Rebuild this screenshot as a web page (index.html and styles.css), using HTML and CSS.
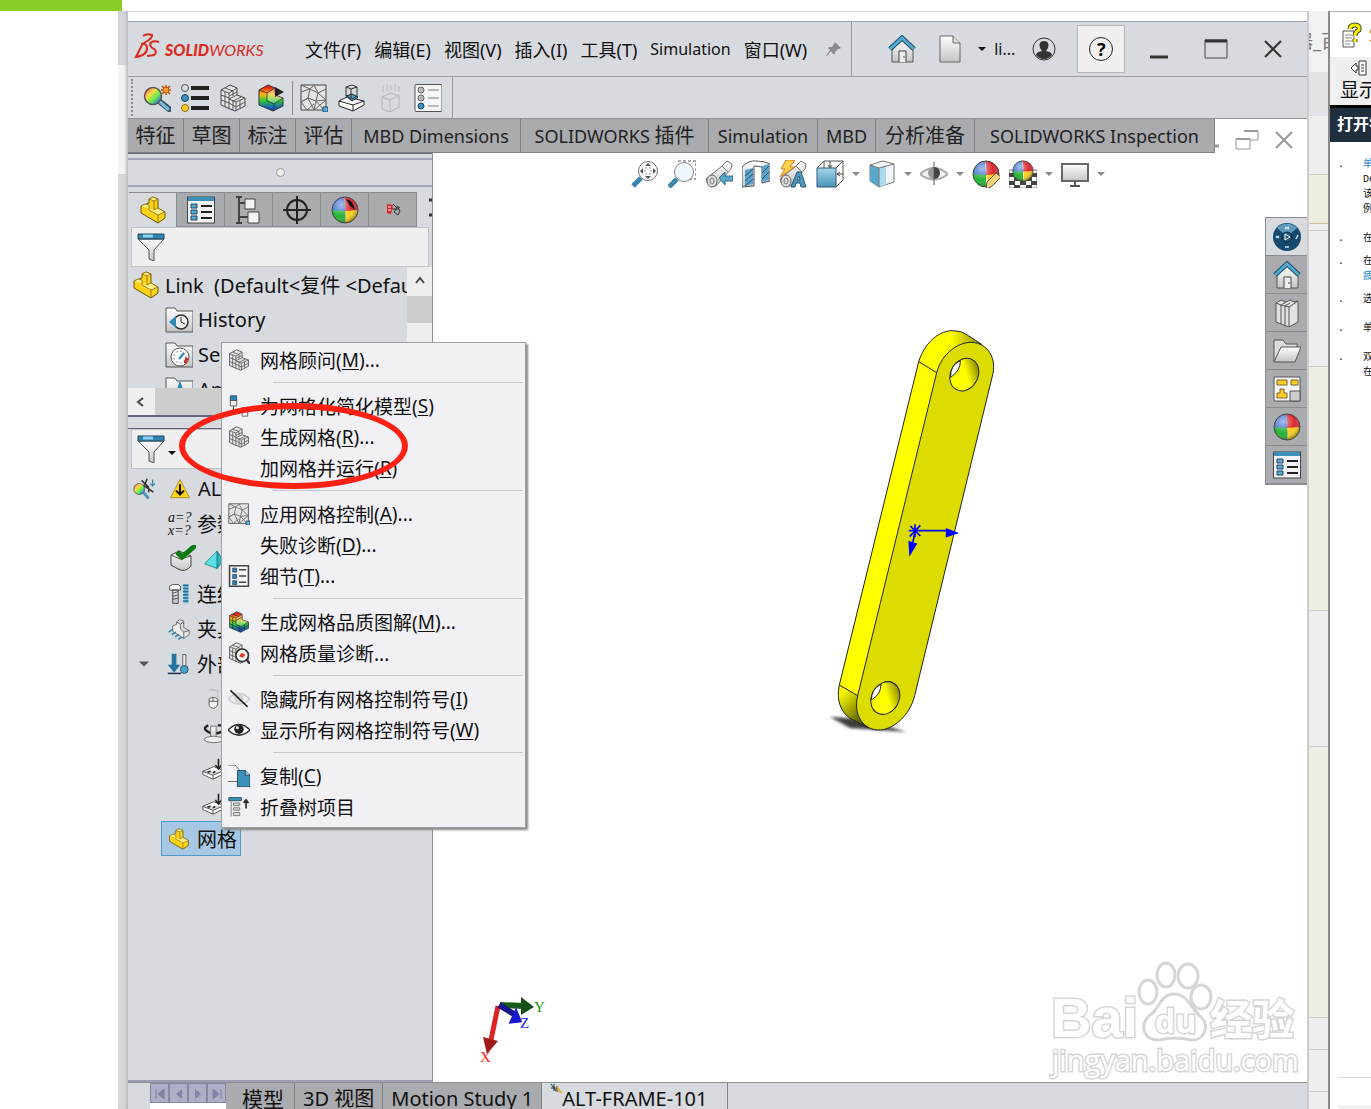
FILE: index.html
```html
<!DOCTYPE html>
<html lang="zh-CN">
<head>
    <meta charset="UTF-8">
    <title>SOLIDWORKS</title>
    <link rel="stylesheet" href="styles.css">
</head>
<body>
    <!-- 图标库 -->
    <svg class="sprite" aria-hidden="true">
        <defs>
            <linearGradient id="rainbow" x1="0" y1="0" x2="1" y2="1">
                <stop offset="0.1" stop-color="#f55"/><stop offset="0.35" stop-color="#fd4"/>
                <stop offset="0.6" stop-color="#6e4"/><stop offset="0.9" stop-color="#36f"/>
            </linearGradient>
            <linearGradient id="heat" x1="0" y1="0" x2="0" y2="1">
                <stop offset="0.1" stop-color="#e21"/><stop offset="0.35" stop-color="#fb1"/>
                <stop offset="0.6" stop-color="#3c3"/><stop offset="0.9" stop-color="#15c"/>
            </linearGradient>
            <linearGradient id="blue" x1="0" y1="0" x2="0" y2="1">
                <stop offset="0" stop-color="#a4d6ea"/><stop offset="1" stop-color="#4a93b8"/>
            </linearGradient>
            <linearGradient id="grey" x1="0" y1="0" x2="0" y2="1">
                <stop offset="0" stop-color="#fff"/><stop offset="1" stop-color="#c4c4c4"/>
            </linearGradient>
            <radialGradient id="shine" cx="0.35" cy="0.3" r="0.75">
                <stop offset="0" stop-color="#fff" stop-opacity="0.55"/><stop offset="0.6" stop-color="#fff" stop-opacity="0"/>
                <stop offset="1" stop-color="#000" stop-opacity="0.45"/>
            </radialGradient>
        </defs>
        <symbol id="part" viewBox="0 0 28 28">
            <path d="M10 3 14 1 19 3V12L26 16V22L19 27 2 17V10L10 7Z" fill="#fcd116" stroke="#6b5510"/>
            <path d="M10 3 14 1 19 3 15 5ZM2 10 6 8 10 9V14L19 19 26 16 19 12 15 14" fill="#ffef86" stroke="#8a6d12" stroke-width="0.8"/>
            <path d="M15 5V14M19 19V27" stroke="#8a6d12" stroke-width="0.8"/>
        </symbol>
        <symbol id="mesh" viewBox="0 0 28 28">
            <path d="M2 6 11 1 18 4V11L26 14V22L16 27 2 21Z" fill="#e6e6e6" stroke="#444"/>
            <path d="M2 6 10 9 18 4M10 9V25M10 15 18 11M10 15 17 18 26 14M17 18V27M2 11 10 14M2 16 10 19 17 23 26 18M6 8V23M6 4 14 7V12M14 17 22 13M14 16V26M21 16V24M10 12 18 8" fill="none" stroke="#555"/>
        </symbol>
        <symbol id="plot" viewBox="0 0 28 28">
            <path d="M2 6 11 1 18 4V11L26 14V22L16 27 2 21Z" fill="url(#heat)" stroke="#333"/>
            <path d="M10 9 18 4V11L26 14 17 19 10 16Z" fill="#fff" fill-opacity="0.35"/>
            <path d="M2 6 10 9 18 4M10 9V17L17 20 26 14M17 20V27" fill="none" stroke="#333" stroke-width="0.8"/>
        </symbol>
        <symbol id="plotmesh" viewBox="0 0 28 28">
            <use href="#plot"/>
            <path d="M2 11 10 14M2 16 10 20 17 23 26 18M6 8V23M6 4 14 7M14 19V26M21 18V24M10 12 18 8" fill="none" stroke="#123" stroke-width="0.8"/>
        </symbol>
        <symbol id="study" viewBox="0 0 28 28">
            <path d="M16 17 26 25" stroke="#2d566c" stroke-width="6" stroke-linecap="round"/>
            <path d="M17 18 25 25" stroke="#7db8d4" stroke-width="3" stroke-linecap="round"/>
            <circle cx="10" cy="12" r="8.500" fill="url(#rainbow)" stroke="#555" stroke-width="1.500"/>
            <path d="M23 1V11M18 6H28M19 2 27 10M27 2 19 10" stroke="#c2500b" stroke-width="1.500"/><circle cx="23" cy="6" r="3" fill="#f7a02b" stroke="#c2500b"/>
        </symbol>
        <symbol id="studyroot" viewBox="0 0 28 28">
            <path d="M14 19 19 25" stroke="#4d98bf" stroke-width="4" stroke-linecap="round"/>
            <circle cx="8" cy="14" r="7" fill="url(#rainbow)" stroke="#555"/>
            <path d="M11 3 20 12M18 1 15 9M13 9 26 18M20 12V18" stroke="#333" stroke-width="2"/><path d="M25 2V9M22 7 25 10 28 7" fill="none" stroke="#2f86b3" stroke-width="1.500"/>
        </symbol>
        <symbol id="bullets" viewBox="0 0 28 28">
            <path d="M10 4H28M10 14H28M10 24H28" stroke="#222" stroke-width="4"/>
            <circle cx="4" cy="4" r="3.500" fill="#ddd" stroke="#555"/><circle cx="4" cy="14" r="3.500" fill="#3b8fc0" stroke="#245"/><circle cx="4" cy="24" r="3.500" fill="#fc2" stroke="#862"/>
        </symbol>
        <symbol id="control" viewBox="0 0 28 28">
            <path d="M1 1H26V26H1Z" fill="#e4e4e4" stroke="#444"/>
            <path d="M1 8 10 5 14 1 18 9 26 5M10 5 8 14 1 18 8 14 16 17 18 9 26 16 16 17 14 26 8 14M10 5 18 9M1 18 7 26 14 20M16 17 24 26M1 1 10 5M14 26 26 16" fill="none" stroke="#666"/>
            <path d="M23 23H28V28H23Z" fill="#5ab3de" stroke="#246"/>
        </symbol>
        <symbol id="sim" viewBox="0 0 28 28">
            <path d="M1 17 9 13 26 17V21L15 27 1 22Z" fill="#fff" stroke="#222"/>
            <path d="M1 17 15 21 26 17M15 21V27" fill="none" stroke="#222"/>
            <path d="M8 12 14 10 20 13 14 17Z" fill="#4aa3cf" stroke="#222"/>
            <path d="M8 3 14 1 19 3V12L14 15 8 12ZM8 3 13 5 19 3M13 5V14" fill="none" stroke="#333"/>
        </symbol>
        <symbol id="ghost" viewBox="0 0 28 28">
            <path d="M6 13 15 9 23 12V23L14 28 6 25ZM6 13 14 16 23 12M14 16V28M7 1V8M11 0V7M15 1V6M19 0V7M23 2V8" fill="none" stroke="#b4b7ba"/>
        </symbol>
        <symbol id="report" viewBox="0 0 28 28">
            <rect x="1" y="0.500" width="27" height="27" rx="1" fill="#f6f6f6" stroke="#555"/>
            <path d="M14 6H25M14 14H25M14 22H25" stroke="#bbb" stroke-width="2"/>
            <circle cx="7" cy="6" r="3" fill="#bbb" stroke="#666"/><circle cx="7" cy="14" r="3" fill="#bbb" stroke="#666"/><circle cx="7" cy="22" r="3" fill="#3b8fc0" stroke="#245"/>
        </symbol>
        <symbol id="home" viewBox="0 0 28 28">
            <path d="M4 14V27H25V14L14 5Z" fill="url(#grey)" stroke="#555"/>
            <path d="M11 27V16H18V27M16 21V23" fill="#eee" stroke="#444"/>
            <path d="M2 14 14 3 26 14" fill="none" stroke="#1f4c63" stroke-width="5"/>
            <path d="M2 14 14 3 26 14" fill="none" stroke="#55a9d2" stroke-width="3"/>
        </symbol>
        <symbol id="page" viewBox="0 0 28 28">
            <path d="M4 1H17L24 8V27H4Z" fill="url(#grey)" stroke="#666"/><path d="M17 1V8H24" fill="#ddd" stroke="#666"/>
        </symbol>
        <symbol id="funnel" viewBox="0 0 28 28">
            <path d="M1 6H27L17 17V28L12 26V17Z" fill="url(#grey)" stroke="#555"/>
            <path d="M1 1H27V6H1Z" fill="#2f86b3" stroke="#245"/><path d="M6 3H16" stroke="#8fd0ee" stroke-width="3"/>
        </symbol>
        <symbol id="props" viewBox="0 0 28 28">
            <rect x="0.500" y="1" width="27" height="26" fill="#f4f4f4" stroke="#444"/>
            <path d="M1 1H27V5H1Z" fill="#3b8fb8"/>
            <path d="M14 10H25M14 16H25M14 22H25" stroke="#222" stroke-width="2"/>
            <path d="M4 8H10V12H4ZM4 14H10V18H4ZM4 20H10V24H4Z" fill="#55a9d2" stroke="#246"/>
        </symbol>
        <symbol id="detail" viewBox="0 0 28 28">
            <path d="M2 1H26V27H2Z" fill="#f6f6f6" stroke="#444" stroke-width="2"/>
            <path d="M14 6H23M14 14H23M14 22H23" stroke="#444" stroke-width="2"/>
            <path d="M6 4H11V9H6ZM6 12H11V17H6ZM6 20H11V25H6Z" fill="#2f86b3" stroke="#246"/>
        </symbol>
        <symbol id="config" viewBox="0 0 28 28">
            <path d="M4 1V27M1 1H7M1 27H7M5 7H12M5 21H14" stroke="#444" stroke-width="2" fill="none"/>
            <path d="M10 3H20V13H10ZM13 16H24V27H13Z" fill="#f4f4f4" stroke="#444"/>
        </symbol>
        <symbol id="target" viewBox="0 0 28 28">
            <circle cx="14" cy="14" r="10" fill="none" stroke="#222" stroke-width="2"/><path d="M14 0V28M0 14H28" stroke="#222" stroke-width="2"/>
        </symbol>
        <symbol id="ball" viewBox="0 0 28 28">
            <path d="M14 14 13 1A13 13 0 0 0 1 15Q8 17 14 15Z" fill="#3c6fd0"/>
            <path d="M13 1A13 13 0 0 1 27 15L14 15Q15 7 13 1Z" fill="#d9262c"/>
            <path d="M1 14A13 13 0 0 0 14 27L14 15Z" fill="#23b332"/>
            <path d="M27 14A13 13 0 0 1 14 27Q16 20 14 15Z" fill="#fbd21c"/>
            <circle cx="14" cy="14" r="13" fill="url(#shine)" stroke="#444"/>
        </symbol>
        <symbol id="dim" viewBox="0 0 28 28">
            <path d="M8 8 14 9 12 18 8 17Z" fill="#d22"/><path d="M9 11H12M9 14H12" stroke="#fff"/>
            <path d="M14 8 18 12 15 16 19 19 21 15 18 10 21 12M13 13H20" fill="none" stroke="#333"/>
        </symbol>
        <symbol id="histfolder" viewBox="0 0 28 28">
            <path d="M1 26V2H10L12 5H28V26Z" fill="url(#grey)" stroke="#555"/>
            <circle cx="16" cy="16" r="7" fill="#eee" stroke="#333" stroke-width="1.500"/><path d="M16 11V16L20 18" fill="none" stroke="#333"/><path d="M4 16 11 10V22Z" fill="#2f86b3"/>
        </symbol>
        <symbol id="sensor" viewBox="0 0 28 28">
            <path d="M1 26V2H10L12 5H28V26Z" fill="url(#grey)" stroke="#555"/>
            <circle cx="15" cy="16" r="9" fill="#fff" stroke="#555"/><path d="M14 18 19 12" stroke="#2f86b3" stroke-width="2"/><path d="M22 17 20 22" stroke="#d22" stroke-width="3"/><circle cx="15" cy="16" r="6" fill="none" stroke="#333" stroke-dasharray="1 3"/>
        </symbol>
        <symbol id="annot" viewBox="0 0 28 28">
            <path d="M1 26V2H10L12 5H28V26Z" fill="url(#grey)" stroke="#555"/><path d="M10 24 15 9 20 24M12 19H18" fill="none" stroke="#2f86b3" stroke-width="3"/>
        </symbol>
        <symbol id="warn" viewBox="0 0 28 28">
            <path d="M14 2 26 25H2Z" fill="#ffd21f" stroke="#9b7a10"/><path d="M14 8V20M9 16 14 21 19 16" fill="none" stroke="#111" stroke-width="2.500"/>
        </symbol>
        <symbol id="solid" viewBox="0 0 28 28">
            <path d="M3 10 11 6 23 11V21Q17 28 10 24L3 20Z" fill="url(#grey)" stroke="#444"/><path d="M3 10 12 14 23 11" fill="none" stroke="#555"/>
            <path d="M9 7 14 12 28 0" fill="none" stroke="#0b7a10" stroke-width="5"/>
        </symbol>
        <symbol id="tetra" viewBox="0 0 28 28">
            <path d="M2 20 18 4V26Z" fill="#5fe0e8" stroke="#177"/><path d="M18 4 26 16 18 26Z" fill="#2ab2c0" stroke="#177"/>
        </symbol>
        <symbol id="bolt" viewBox="0 0 28 28">
            <path d="M2 4 6 2H13L16 4V9H2ZM6 9H13V26H6Z" fill="url(#grey)" stroke="#333"/><path d="M6 13 13 11M6 17 13 15M6 21 13 19" stroke="#333"/>
            <path d="M20 2H26V26H20Z" fill="#7cc0e0"/><path d="M19 3H26M19 7H26M19 11H26M19 15H26M19 19H26M19 23H26" stroke="#246d94" stroke-width="2"/>
        </symbol>
        <symbol id="fixture" viewBox="0 0 28 28">
            <path d="M11 5 15 2 20 4V12L27 16V21L20 26 6 17V10L11 8ZM11 5 16 8 20 4M16 8V14L20 18 27 16M20 18V26" fill="#ececec" stroke="#555"/>
            <path d="M1 18 6 14M5 21 10 18M9 24 14 21M13 27 18 24" stroke="#2f86b3" stroke-width="2"/>
        </symbol>
        <symbol id="load" viewBox="0 0 28 28">
            <path d="M1 26H18" stroke="#235" stroke-width="2"/><path d="M9 1V18" stroke="#2476a0" stroke-width="6"/><path d="M1 15H17L9 25Z" fill="#2476a0"/>
            <path d="M20 2H24V18H20Z" fill="#eee" stroke="#444"/><circle cx="22" cy="21" r="5" fill="#4aa3cf" stroke="#245"/>
        </symbol>
        <symbol id="gravity" viewBox="0 0 28 28">
            <path d="M8 3H20V14M10 1 22 4" fill="none" stroke="#bbb"/><path d="M9 14Q14 10 20 14V22Q14 30 9 22Z" fill="#f2f2f2" stroke="#444"/><path d="M9 17H20M14 12V17" stroke="#444"/>
        </symbol>
        <symbol id="spin" viewBox="0 0 28 28">
            <path d="M8 3Q-1 7 9 12Q18 15 25 11M20 3H28V10" fill="none" stroke="#222" stroke-width="3"/><path d="M11 4H18V20H11Z" fill="url(#grey)" stroke="#555"/><ellipse cx="15" cy="21" rx="12" ry="4" fill="#eee" stroke="#555"/>
        </symbol>
        <symbol id="press" viewBox="0 0 28 28">
            <path d="M1 17 15 11 28 16V20L14 27 1 21ZM1 17 14 22 28 16M14 22V27" fill="#fff" stroke="#333"/><path d="M21 1V13M17 9 21 14 25 9M7 18 11 17M14 19 17 17" fill="none" stroke="#222" stroke-width="2"/>
        </symbol>
        <symbol id="simplify" viewBox="0 0 28 28">
            <path d="M3 1H11V7H3Z" fill="#2f86b3" stroke="#245"/><path d="M3 7H11V14H3Z" fill="#eee" stroke="#444"/><path d="M7 14V21H13M10 18 14 21 10 24" fill="none" stroke="#333"/><path d="M18 16H25V27H18Z" fill="#eee" stroke="#555"/>
        </symbol>
        <symbol id="diag" viewBox="0 0 28 28">
            <use href="#mesh"/><circle cx="18" cy="17" r="8" fill="#f4f4f4" stroke="#333" stroke-width="2"/><path d="M24 23 28 28" stroke="#333" stroke-width="3"/><path d="M14 18 17 14 22 16 19 20Z" fill="#e23b1c"/>
        </symbol>
        <symbol id="eye" viewBox="0 0 28 28">
            <path d="M0 14Q14 0 28 14Q14 27 0 14Z" fill="#fff" stroke="#333" stroke-width="2"/><circle cx="14" cy="13" r="6" fill="#222"/><circle cx="12" cy="11" r="2" fill="#ddd"/>
        </symbol>
        <symbol id="noeye" viewBox="0 0 28 28">
            <path d="M0 14Q14 0 28 14Q14 27 0 14Z" fill="#eee" stroke="#ccc" stroke-width="2"/><circle cx="14" cy="13" r="6" fill="#d4d4d4"/><path d="M3 3 25 24" stroke="#222" stroke-width="2"/>
        </symbol>
        <symbol id="copy" viewBox="0 0 28 28">
            <path d="M-1 0H9L14 6V21H-1Z" fill="#f6f6f6" stroke="#444"/><path d="M12 7H22L28 13V28H12Z" fill="#3b8fb8" stroke="#234"/><path d="M22 7V13H28" fill="#9fd2ea" stroke="#234"/>
        </symbol>
        <symbol id="collapse" viewBox="0 0 28 28">
            <path d="M1 2H17V6H1Z" fill="#3b8fb8" stroke="#245"/><path d="M4 7V26M7 9H15V12H7ZM7 15H15V18H7ZM7 21H15V25H7Z" stroke="#666" fill="#ddd"/><path d="M23 16V6M20 9 23 5 26 9" fill="none" stroke="#222" stroke-width="2"/>
        </symbol>
        <symbol id="zoomfit" viewBox="0 0 28 28">
            <path d="M2 26 10 18" stroke="#3d87ac" stroke-width="5"/><circle cx="17" cy="11" r="9.500" fill="#f8fbfd" stroke="#777"/>
            <path d="M17 3 20 6H14ZM17 19 14 16H20ZM9 11 12 8V14ZM25 11 22 14V8Z" fill="#555"/><path d="M14 8H20V14H14Z" fill="none" stroke="#999" stroke-dasharray="2 2"/>
        </symbol>
        <symbol id="zoomarea" viewBox="0 0 28 28">
            <path d="M10 1H28V19H22" fill="none" stroke="#555" stroke-dasharray="3 2"/><path d="M1 27 9 19" stroke="#3d87ac" stroke-width="5"/><circle cx="16" cy="12" r="9.500" fill="#eef7fb" stroke="#888"/>
        </symbol>
        <symbol id="scope" viewBox="0 0 28 28">
            <path d="M1 19 17 6 22 1 27 4 26 9 11 26Q3 28 1 19Z" fill="url(#grey)" stroke="#777"/><ellipse cx="7" cy="21" rx="5" ry="6" fill="#ddd" stroke="#666"/><ellipse cx="7" cy="21" rx="2" ry="3" fill="none" stroke="#777"/><path d="M17 6 23 12" stroke="#777"/>
        </symbol>
        <symbol id="prev" viewBox="0 0 28 28">
            <use href="#scope"/><path d="M14 18 20 12V16H28V21H20V25Z" fill="#5aa6cb" stroke="#2d6c8e"/>
        </symbol>
        <symbol id="section" viewBox="0 0 28 28">
            <path d="M0 7Q7 0 14 1Q23 1 28 4V21L20 23V7L12 6V26L0 27Z" fill="url(#grey)" stroke="#555"/>
            <path d="M3 10 11 8V24L3 26ZM20 6 27 4V20L20 22Z" fill="#5aa6cb"/><path d="M3 16 11 9M3 21 11 14M3 26 11 19M20 13 27 6M20 19 27 12" stroke="#235" stroke-width="0.800"/>
        </symbol>
        <symbol id="dynview" viewBox="0 0 28 28">
            <use href="#scope"/><path d="M7 0H16L11 7H16L1 17 6 9H2Z" fill="#ffd34a" stroke="#d07b20"/><path d="M12 27 18 12H22L27 27H22L21 23H17L16 27ZM18 20H21L20 16Z" fill="#4d98bf" stroke="#245a78"/>
        </symbol>
        <symbol id="orient" viewBox="0 0 28 28">
            <path d="M1 8 8 1H27V20L20 27M20 8 27 1M8 1V8" fill="none" stroke="#555"/><path d="M1 8H20V27H1Z" fill="url(#blue)" stroke="#357"/><path d="M14 1V7M12 5 14 8 16 5M27 14H21M24 12 21 14 24 16" fill="none" stroke="#444"/>
        </symbol>
        <symbol id="cube" viewBox="0 0 28 28">
            <path d="M2 5 15 1 26 4V22L11 27 2 21Z" fill="#f2f6f8" stroke="#777"/><path d="M2 5 11 8V27L2 21Z" fill="#5aa6cb"/><path d="M11 8 18 6V25L11 27Z" fill="#a8d9ec"/><path d="M2 5 11 8 26 4M11 8V27" fill="none" stroke="#777"/>
        </symbol>
        <symbol id="hide" viewBox="0 0 28 28">
            <path d="M0 14Q14 2 28 14Q14 25 0 14Z" fill="#f4f4f4" stroke="#aaa" stroke-width="2"/><circle cx="14" cy="13" r="6" fill="#999"/><path d="M14 7A6 6 0 0 1 14 19Z" fill="#444"/><path d="M14 2V25" stroke="#555"/>
        </symbol>
        <symbol id="appear" viewBox="0 0 28 28">
            <use href="#ball"/><path d="M15 22 24 13 29 17 19 27 14 29Z" fill="#f0d27a" stroke="#654"/>
        </symbol>
        <symbol id="scene" viewBox="0 0 28 28">
            <path d="M0 10H28V28H0Z" fill="#fff" stroke="#777"/><path d="M0 13H5V17H0ZM23 13H28V17H23ZM5 17H11V21H5ZM17 17H23V21H17ZM0 21H6V25H0ZM11 21H17V25H11ZM22 21H28V25H22ZM5 25H11V28H5ZM17 25H23V28H17Z" fill="#444"/><use href="#ball" x="3" y="0" width="22" height="22"/>
        </symbol>
        <symbol id="screen" viewBox="0 0 28 28">
            <path d="M1 4H27V21H1Z" fill="url(#grey)" stroke="#666" stroke-width="2"/><path d="M14 21V26M9 26H19" stroke="#555" stroke-width="2"/>
        </symbol>
        <symbol id="down" viewBox="0 0 8 8"><path d="M0 2H8L4 6Z" fill="currentColor"/></symbol>
        <symbol id="wheel" viewBox="0 0 28 28">
            <circle cx="14" cy="14" r="14" fill="#174a6c"/><path d="M4 5A14 14 0 0 1 24 5L18 10H10Z" fill="#5d9abd"/><circle cx="14" cy="14" r="5" fill="#1d5a82" stroke="#0a2a40"/>
            <path d="M12 11 17 14 12 17Z" fill="none" stroke="#fff"/><path d="M12 4 16 6M16 4 12 6M3 13 6 15M6 13 3 15M23 16 25 12M12 24H16" stroke="#cde" stroke-width="1.500"/>
        </symbol>
        <symbol id="books" viewBox="0 0 28 28">
            <path d="M3 4 8 1 13 3 17 1 21 3 25 2V23L16 28 3 23Z" fill="#e2e2e2" stroke="#555"/><path d="M3 4 8 6V25M8 6 13 3M8 6 12 7V26M12 7 17 4M12 7 16 8V28M16 8 25 2" fill="none" stroke="#555"/>
        </symbol>
        <symbol id="folder" viewBox="0 0 28 28">
            <path d="M1 25V3H10L13 7H24V12" fill="#ddd" stroke="#555"/><path d="M1 25 8 10H28L22 25Z" fill="url(#grey)" stroke="#555"/>
        </symbol>
        <symbol id="palette" viewBox="0 0 28 28">
            <path d="M1 2H27V26H1Z" fill="#f6f6f6" stroke="#555"/><path d="M4 5H14V10H4ZM18 5H25V10H18ZM4 18H7V14H11V18H14V23H4Z" fill="#fc2" stroke="#763"/><path d="M17 16H27V26H17Z" fill="#ccc" stroke="#555"/>
        </symbol>
        <symbol id="book-help" viewBox="0 0 28 28">
            <path d="M3 10H14V26H3Z" fill="#fff" stroke="#555"/><path d="M5 14H12M5 17H12M5 20H12M5 23H10" stroke="#888"/><path d="M10 8Q10 4 15 4Q20 4 19 9Q15 11 15 15M15 18V21" fill="none" stroke="#443" stroke-width="5"/><path d="M10 8Q10 4 15 4Q20 4 19 9Q15 11 15 15M15 18V21" fill="none" stroke="#fe0" stroke-width="3"/>
        </symbol>
    </svg>

    <div class="banner"></div>
    <div class="desktop">
        <div class="edge"></div>

        <!-- 主窗口 -->
        <main class="app">
            <header class="titlebar">
                <div class="logo">
                    <svg width="26" height="26" viewBox="0 0 26 26" fill="none" stroke="#dc2a1e" stroke-width="2"><path d="M8 3Q12 0 17 2Q18 5 9 10M8 10 1 24Q13 22 12 14Q11 10 6 11M24 9Q17 7 15 11Q15 14 19 16Q23 19 19 22L12 23"/></svg>
                    <span><b>SOLID</b>WORKS</span>
                </div>
                <nav class="menubar">
                    <button>文件(F)</button>
                    <button>编辑(E)</button>
                    <button>视图(V)</button>
                    <button>插入(I)</button>
                    <button>工具(T)</button>
                    <button class="latin">Simulation</button>
                    <button>窗口(W)</button>
                </nav>
                <svg class="pin" width="16" height="16" viewBox="0 0 16 16" fill="#8a8d90"><path d="M9 1 15 7 13 8 12 8 9 11 9 13 7 13 5 10 1 15 0 15 4 9 2 7 3 6 6 6 8 3Z"/></svg>
                <div class="titletools">
                    <button aria-label="主页"><svg class="icon"><use href="#home"/></svg></button>
                    <button class="new" aria-label="新建"><svg class="icon"><use href="#page"/></svg></button>
                    <button class="drop" aria-label="展开"><svg class="arrow"><use href="#down"/></svg></button>
                    <span class="doc">li...</span>
                    <button aria-label="用户"><svg width="24" height="24" viewBox="0 0 24 24"><circle cx="12" cy="12" r="11" fill="none" stroke="#333"/><path d="M12 4Q18 4 16 11L14 14Q20 15 20 18Q17 22 12 22Q7 22 4 18Q4 15 10 14L8 11Q6 4 12 4Z" fill="#333"/></svg></button>
                    <button class="helpbtn" aria-label="帮助"><span>?</span></button>
                </div>
                <div class="winbtns">
                    <button aria-label="最小化"><svg width="24" height="24"><path d="M3 20H21" stroke="#333" stroke-width="3"/></svg></button>
                    <button aria-label="最大化"><svg width="24" height="24"><path d="M1 3H23V21H1Z" fill="none" stroke="#444"/><path d="M1 4H23" stroke="#333" stroke-width="3"/></svg></button>
                    <button aria-label="关闭"><svg width="24" height="24"><path d="M4 4 20 20M20 4 4 20" stroke="#333" stroke-width="2"/></svg></button>
                </div>
            </header>

            <div class="toolbar">
                <div class="tools">
                    <i class="grip"></i>
                    <svg class="icon"><use href="#study"/></svg>
                    <svg class="icon"><use href="#bullets"/></svg>
                    <svg class="icon"><use href="#mesh"/></svg>
                    <svg class="icon"><use href="#plot"/><path d="M18 3 27 8 18 13Z" fill="#222"/></svg>
                    <i class="sep"></i>
                    <svg class="icon"><use href="#control"/></svg>
                    <svg class="icon"><use href="#sim"/></svg>
                    <svg class="icon"><use href="#ghost"/></svg>
                    <svg class="icon"><use href="#report"/></svg>
                </div>
            </div>

            <div class="tabrow">
                <nav class="cmdtabs">
                    <button>特征</button>
                    <button>草图</button>
                    <button>标注</button>
                    <button>评估</button>
                    <button class="latin">MBD Dimensions</button>
                    <button class="latin">SOLIDWORKS <span>插件</span></button>
                    <button class="latin">Simulation</button>
                    <button class="latin">MBD</button>
                    <button>分析准备</button>
                    <button class="latin">SOLIDWORKS Inspection</button>
                </nav>
                <div class="docbtns">
                    <svg width="6" height="24"><path d="M0 18H4" stroke="#999" stroke-width="3"/></svg>
                    <svg width="24" height="24"><path d="M9 3H23V12H15M1 11H15V21H1Z" fill="none" stroke="#999"/><path d="M9 3H23M1 11H15" stroke="#999" stroke-width="2"/></svg>
                    <svg width="24" height="24"><path d="M4 4 20 20M20 4 4 20" stroke="#999" stroke-width="2"/></svg>
                </div>
            </div>

            <div class="work">
                <!-- 左侧管理器 -->
                <aside class="manager">
                    <div class="handle"><i></i></div>
                    <div class="mtabs">
                        <button class="on" aria-label="设计树"><svg class="icon"><use href="#part"/></svg></button>
                        <button aria-label="属性"><svg class="icon"><use href="#props"/></svg></button>
                        <button aria-label="配置"><svg class="icon"><use href="#config"/></svg></button>
                        <button aria-label="尺寸"><svg class="icon"><use href="#target"/></svg></button>
                        <button aria-label="外观"><svg class="icon"><use href="#ball"/><path d="M15 3Q22 4 24 14L19 10Z" fill="#111"/></svg></button>
                        <button aria-label="标注"><svg class="icon"><use href="#dim"/></svg></button>
                        <svg class="more" width="4" height="35"><path d="M1 8H4M1 23H4" stroke="#333" stroke-width="3"/></svg>
                    </div>
                    <label class="filter">
                        <svg class="icon"><use href="#funnel"/></svg>
                        <input type="text" aria-label="过滤">
                    </label>
                    <div class="treebox">
                        <ul class="tree">
                            <li class="root"><svg class="icon"><use href="#part"/></svg>Link&nbsp; (Default&lt;复件 &lt;Default&gt;</li>
                            <li><svg class="icon"><use href="#histfolder"/></svg>History</li>
                            <li><svg class="icon"><use href="#sensor"/></svg>Sensors</li>
                            <li><svg class="icon"><use href="#annot"/></svg>Annotations</li>
                        </ul>
                        <div class="vscroll"><svg width="12" height="12"><path d="M2 8 6 3 10 8" fill="none" stroke="#444" stroke-width="2"/></svg><i></i></div>
                    </div>
                    <div class="hscroll"><svg width="12" height="12"><path d="M8 2 3 6 8 10" fill="none" stroke="#444" stroke-width="2"/></svg><i></i></div>
                    <div class="splitter"></div>
                    <label class="filter study">
                        <svg class="icon"><use href="#funnel"/></svg>
                        <svg class="arrow"><use href="#down"/></svg>
                        <input type="text" aria-label="过滤算例">
                    </label>
                    <ul class="tree studytree">
                        <li class="top"><svg class="small"><use href="#studyroot"/></svg><svg class="small"><use href="#warn"/></svg>ALT-FRAME-101</li>
                        <li><em>a=?<br>x=?</em>参数</li>
                        <li><svg class="icon"><use href="#solid"/></svg><svg class="small"><use href="#tetra"/></svg></li>
                        <li><svg class="small"><use href="#bolt"/></svg>连结</li>
                        <li><svg class="small"><use href="#fixture"/></svg>夹具</li>
                        <li class="open"><svg class="arrow"><use href="#down"/></svg><svg class="small"><use href="#load"/></svg>外部载荷</li>
                        <li class="sub"><svg class="small"><use href="#gravity"/></svg></li>
                        <li class="sub"><svg class="small"><use href="#spin"/></svg></li>
                        <li class="sub"><svg class="small"><use href="#press"/></svg></li>
                        <li class="sub"><svg class="small"><use href="#press"/></svg></li>
                        <li class="sel"><svg class="small"><use href="#part"/></svg>网格</li>
                    </ul>
                </aside>

                <!-- 图形区域 -->
                <section class="viewport">
                    <div class="headsup">
                        <svg class="icon"><use href="#zoomfit"/></svg>
                        <svg class="icon"><use href="#zoomarea"/></svg>
                        <svg class="icon"><use href="#prev"/></svg>
                        <svg class="icon"><use href="#section"/></svg>
                        <svg class="icon"><use href="#dynview"/></svg>
                        <svg class="icon"><use href="#orient"/></svg>
                        <svg class="arrow"><use href="#down"/></svg>
                        <svg class="icon"><use href="#cube"/></svg>
                        <svg class="arrow"><use href="#down"/></svg>
                        <svg class="icon"><use href="#hide"/></svg>
                        <svg class="arrow"><use href="#down"/></svg>
                        <svg class="icon"><use href="#appear"/></svg>
                        <svg class="icon"><use href="#scene"/></svg>
                        <svg class="arrow"><use href="#down"/></svg>
                        <svg class="icon"><use href="#screen"/></svg>
                        <svg class="arrow"><use href="#down"/></svg>
                    </div>

                    <!-- 连杆模型 -->
                    <svg class="model" width="220" height="440" viewBox="0 0 660 1320">
                        <defs>
                            <linearGradient id="endtop" x1="0" x2="1"><stop offset="0.5" stop-color="#ff0"/><stop offset="1" stop-color="#8c8c00"/></linearGradient>
                            <linearGradient id="endlow" x1="0" y1="0" x2="0.7" y2="1"><stop offset="0.2" stop-color="#f4f400"/><stop offset="1" stop-color="#4a4a00"/></linearGradient>
                            <linearGradient id="hole" x1="0" y1="1" x2="0.8" y2="0"><stop offset="0.6" stop-color="#ff0"/><stop offset="1" stop-color="#777700"/></linearGradient>
                            <filter id="soft"><feGaussianBlur stdDeviation="4"/></filter>
                        </defs>
                        <path d="M90 1220 190 1228 320 1266 150 1254Z" fill="#3c3c3c" filter="url(#soft)"/>
                        <path d="M118 1125 356 155 410 188 173 1157Z" fill="#ff0"/>
                        <path d="M356 155C375 95 420 60 460 62Q485 62 500 74L548 104 410 188Z" fill="url(#endtop)"/>
                        <path d="M118 1125C108 1170 122 1205 150 1225L205 1255 173 1157Z" fill="url(#endlow)"/>
                        <path d="M410 188C425 130 475 96 515 97C565 100 588 145 579 190L344 1157C330 1215 280 1262 232 1260C185 1256 160 1210 173 1157Z" fill="#dcdc00" stroke="#222" stroke-width="3"/>
                        <path d="M205 1253 150 1225C122 1205 108 1170 118 1125L356 155C375 95 420 60 460 62Q485 62 500 74L545 103M356 155 410 188M118 1125 173 1157" fill="none" stroke="#222" stroke-width="3"/>
                        <g stroke="#222" stroke-width="3">
                            <ellipse cx="493" cy="194" rx="41" ry="51" transform="rotate(28 493 194)" fill="url(#hole)"/>
                            <path d="M452 202Q450 165 481 152Q482 182 452 202Z" fill="#fff"/>
                            <ellipse cx="256" cy="1164" rx="41" ry="51" transform="rotate(28 256 1164)" fill="url(#hole)"/>
                            <path d="M214 1170Q214 1138 243 1122Q244 1152 214 1170Z" fill="#fff"/>
                        </g>
                        <g fill="#00f" stroke="#00f" stroke-width="5">
                            <path d="M345 643V682M326 662H440M331 648 361 678M361 646 329 680M345 665 338 700"/>
                            <path d="M440 658 470 669 440 679ZM328 696 348 702 330 732Z"/>
                        </g>
                    </svg>

                    <!-- 坐标轴 -->
                    <svg class="triad" width="80" height="76" viewBox="0 0 80 76">
                        <path d="M22 11 46 12" stroke="#1a5c1a" stroke-width="6"/><path d="M43 3 56 13 43 21Z" fill="#174f17"/>
                        <path d="M20 12 13 46" stroke="#dc2424" stroke-width="5"/><path d="M5 43 20 47 9 60Z" fill="#a01a1a"/>
                        <path d="M21 11 36 20" stroke="#15158c" stroke-width="6"/><path d="M38 17 42 27 33 28Z" fill="#1818cf" stroke="#1818cf" stroke-width="3"/>
                        <text x="56" y="18" fill="#0a9a0a">Y</text><text x="42" y="34" fill="#22f">Z</text><text x="2" y="68" fill="#f22">X</text>
                    </svg>

                    <div class="taskpane">
                        <button class="on" aria-label="资源轮"><svg class="icon"><use href="#wheel"/></svg></button>
                        <button aria-label="资源"><svg class="icon"><use href="#home"/></svg></button>
                        <button aria-label="设计库"><svg class="icon"><use href="#books"/></svg></button>
                        <button aria-label="文件探索器"><svg class="icon"><use href="#folder"/></svg></button>
                        <button aria-label="视图调色板"><svg class="icon"><use href="#palette"/></svg></button>
                        <button aria-label="外观布景"><svg class="icon"><use href="#ball"/></svg></button>
                        <button aria-label="自定义属性"><svg class="icon"><use href="#props"/></svg></button>
                    </div>

                    <svg class="watermark" width="260" height="124" viewBox="0 0 260 124">
                        <g fill="#fff" stroke="#d6d6d6" stroke-width="3">
                            <text class="wm-big" x="8" y="78">Bai</text>
                            <ellipse cx="105" cy="33" rx="9" ry="12"/><ellipse cx="123" cy="16" rx="9" ry="12"/><ellipse cx="145" cy="17" rx="10" ry="12"/><ellipse cx="158" cy="38" rx="10" ry="12"/>
                            <path d="M131 35C145 35 148 50 157 57C168 67 161 82 148 81Q131 77 117 81C101 82 96 67 106 57C117 50 117 35 131 35Z"/>
                            <text class="wm-du" x="112" y="74">du</text>
                            <text class="wm-cn" x="167" y="76">经验</text>
                            <text class="wm-url" x="9" y="112">jingyan.baidu.com</text>
                        </g>
                    </svg>
                </section>

                <!-- 右键菜单 -->
                <div class="ctxmenu" role="menu">
                    <button><svg class="small"><use href="#mesh"/></svg>网格顾问(<u>M</u>)...</button>
                    <hr>
                    <button><svg class="small"><use href="#simplify"/></svg>为网格化简化模型(<u>S</u>)</button>
                    <button><svg class="small"><use href="#mesh"/></svg>生成网格(<u>R</u>)...</button>
                    <button><i class="small"></i>加网格并运行(<u>R</u>)</button>
                    <hr>
                    <button><svg class="small"><use href="#control"/></svg>应用网格控制(<u>A</u>)...</button>
                    <button><i class="small"></i>失败诊断(<u>D</u>)...</button>
                    <button><svg class="small"><use href="#detail"/></svg>细节(<u>T</u>)...</button>
                    <hr>
                    <button><svg class="small"><use href="#plotmesh"/></svg>生成网格品质图解(<u>M</u>)...</button>
                    <button><svg class="small"><use href="#diag"/></svg>网格质量诊断...</button>
                    <hr>
                    <button><svg class="small"><use href="#noeye"/></svg>隐藏所有网格控制符号(<u>I</u>)</button>
                    <button><svg class="small"><use href="#eye"/></svg>显示所有网格控制符号(<u>W</u>)</button>
                    <hr>
                    <button><svg class="small"><use href="#copy"/></svg>复制(<u>C</u>)</button>
                    <button><svg class="small"><use href="#collapse"/></svg>折叠树项目</button>
                </div>
                <div class="mark"></div>
            </div>

            <footer class="bottom">
                <div class="nav">
                    <button aria-label="最前"><svg width="12" height="12"><path d="M2 1V11M10 1 4 6 10 11Z" fill="#8082a8" stroke="#8082a8"/></svg></button>
                    <button aria-label="向前"><svg width="12" height="12"><path d="M9 1 3 6 9 11Z" fill="#8082a8"/></svg></button>
                    <button aria-label="向后"><svg width="12" height="12"><path d="M3 1 9 6 3 11Z" fill="#8082a8"/></svg></button>
                    <button aria-label="最后"><svg width="12" height="12"><path d="M10 1V11M2 1 8 6 2 11Z" fill="#8082a8" stroke="#8082a8"/></svg></button>
                </div>
                <button class="cn">模型</button>
                <button>3D <span>视图</span></button>
                <button>Motion Study 1</button>
                <button class="on"><svg width="12" height="12"><path d="M1 1 6 8M4 1V8M7 3V9M1 5H8" stroke="#234" fill="none"/><path d="M7 4 11 10" stroke="#da2" stroke-width="2"/></svg>ALT-FRAME-101</button>
            </footer>
        </main>

        <!-- 后面的浏览器窗口 -->
        <div class="behind">
            <div class="title">器_百</div>
            <div class="bar"></div>
            <div class="head"></div>
            <div class="notice"></div>
            <div class="line"></div>
            <div class="block"></div>
            <div class="post"></div>
            <div class="block"></div>
            <div class="post"></div>
            <div class="row"></div>
            <div class="row"></div>
        </div>

        <!-- 帮助窗口 -->
        <aside class="help">
            <div class="helptitle"><svg class="icon"><use href="#book-help"/></svg>SOLIDWORKS</div>
            <div class="helptool"><button><svg width="18" height="16"><path d="M1 8 6 3V6H8V10H6V13Z" fill="#fff" stroke="#333"/><path d="M9 1H16V15H9ZM11 5H14M11 8H14M11 11H14" fill="#fff" stroke="#333"/></svg>显示</button></div>
            <h1>打开零件</h1>
            <ul>
                <li><a href="#">单击</a><br>Default</li>
                <li class="note">该零件<br>例如</li>
                <li>在此</li>
                <li class="near">在树<br><a href="#">疲劳</a></li>
                <li class="near">选择</li>
                <li>单击</li>
                <li>双击<br>在此</li>
            </ul>
            <div class="helpfoot"></div>
        </aside>
    </div>
</body>
</html>
```

FILE: styles.css
```css
*{
    box-sizing: border-box;
    margin: 0;
    padding: 0;
}
body{
    display: flex;
    flex-direction: column;
    height: 100vh;
    overflow: hidden;
    background: #fff;
    color: #111;
    font: 19px "Noto Sans", "Noto Sans CJK SC", sans-serif;
}
button{
    border: 0;
    background: none;
    color: inherit;
    font: inherit;
    white-space: nowrap;
}
ul{
    list-style: none;
}
svg{
    flex: none;
    overflow: visible;
}
.sprite{
    position: absolute;
    width: 0;
    height: 0;
}
.icon{
    width: 28px;
    height: 28px;
}
.small{
    width: 22px;
    height: 22px;
    flex: none;
}
.arrow{
    width: 8px;
    height: 8px;
}

/* 顶部绿条 */
.banner{
    width: 122px;
    height: 11px;
    background: #8acd27;
}
.desktop{
    display: flex;
    flex: 1;
    min-height: 0;
    padding-left: 118px;
}
.edge{
    width: 10px;
    background: linear-gradient(#d3d7dc 54px, #f4f4f4 54px, #f4f4f4 163px, #d8d8d8 163px);
    box-shadow: inset -3px 0 3px -1px #bbb;
}

/* 主窗口 */
.app{
    display: flex;
    flex: 1;
    flex-direction: column;
    min-width: 0;
    padding-top: 9px;
    border-top: 1px solid #ddd;
}

/* 标题栏 */
.titlebar{
    display: flex;
    align-items: center;
    height: 56px;
    border-top: 1px solid #a2a5a8;
    border-bottom: 1px solid #999c9f;
    background: #d7dadf;
}
.logo{
    display: flex;
    align-items: center;
    gap: 4px;
    width: 171px;
    padding-left: 7px;
    color: #dc2a1e;
    font: italic 16px Lato, sans-serif;
}
.logo svg{
    margin-bottom: 6px;
}
.logo b{
    font-weight: 900;
}
.menubar{
    display: flex;
    align-items: center;
    gap: 13px;
    padding-left: 6px;
    font-size: 18px;
}
.menubar .latin{
    font-size: 16px;
}
.pin{
    margin: 0 9px 0 19px;
}
.titletools{
    display: flex;
    align-items: center;
    height: 100%;
    padding-left: 36px;
    border-left: 1px solid #999c9f;
}
.titletools button{
    display: flex;
}
.titletools .new{
    margin-left: 20px;
}
.titletools .drop{
    margin: 0 8px 0 14px;
}
.doc{
    width: 38px;
    font-size: 16px;
}
.titletools .helpbtn{
    align-items: center;
    justify-content: center;
    width: 48px;
    height: 48px;
    margin-left: 21px;
    border: 1px solid #b4b4b4;
    background: #f0f0f0;
}
.helpbtn span{
    width: 24px;
    height: 24px;
    border: 1px solid #222;
    border-radius: 50%;
    font-size: 18px;
    font-weight: bold;
    line-height: 22px;
}
.winbtns{
    display: flex;
    gap: 33px;
    margin-left: auto;
    padding-right: 22px;
}
.winbtns button{
    display: flex;
}

/* 工具栏 */
.toolbar{
    height: 41px;
    background: #d7dadf;
}
.tools{
    display: flex;
    align-items: center;
    gap: 10px;
    width: 325px;
    height: 100%;
    border-right: 1px solid #999c9f;
}
.grip{
    height: 37px;
    margin-left: 3px;
    border-left: 2px dotted #8a8d90;
}
.sep{
    height: 34px;
    margin: 0 -3px;
    border-left: 1px solid #8a8d90;
}

/* 命令选项卡 */
.tabrow{
    display: flex;
    height: 35px;
    border-top: 1px solid #8e9194;
}
.cmdtabs{
    display: grid;
    grid-template-columns: 56px 56px 56px 56px 169px 188px 109px 58px 99px 240px;
    background: #a9abae;
}
.cmdtabs button{
    border-right: 1px solid #808386;
    border-bottom: 1px solid #808386;
    color: #222;
    font-size: 20px;
    line-height: 32px;
}
.cmdtabs .latin{
    font-size: 18px;
}
.cmdtabs span{
    font-size: 20px;
}
.docbtns{
    display: flex;
    flex: 1;
    align-items: center;
    justify-content: space-between;
    padding: 8px 11px 0 0;
}

/* 工作区 */
.work{
    position: relative;
    display: flex;
    flex: 1;
    min-height: 0;
}
.manager{
    width: 305px;
    overflow: hidden;
    border-right: 1px solid #8e9194;
    border-bottom: 2px solid #9c9fb4;
    background: #d7dade;
}
.handle{
    display: flex;
    align-items: center;
    justify-content: center;
    height: 34px;
    margin-bottom: 5px;
    border-top: 1px solid #62667c;
    border-bottom: 2px solid #a0a4b8;
    box-shadow: inset 0 4px #d7dade, inset 0 6px #a0a4b8;
}
.handle i{
    width: 9px;
    height: 9px;
    margin-top: 5px;
    border: 1px solid #999;
    border-radius: 50%;
    background: #eee;
}
.mtabs{
    display: flex;
    height: 35px;
    margin-left: 1px;
}
.mtabs button{
    display: flex;
    align-items: center;
    justify-content: center;
    width: 48px;
    border: 1px solid #8a8d90;
    border-left: 0;
    background: #a9abae;
}
.mtabs .on{
    border-bottom: 0;
    background: #d7dade;
}
.more{
    margin-left: 11px;
}
.filter{
    display: flex;
    align-items: center;
    height: 40px;
    margin: 0 3px;
    padding-left: 5px;
    border: 1px solid #c2c4c6;
    background: #f0f0f0;
}
.filter input{
    flex: 1;
    min-width: 0;
    height: 100%;
    border: 0;
    background: none;
}
.filter .arrow{
    margin: 8px 0 0 3px;
}
.treebox{
    display: flex;
    height: 121px;
    overflow: hidden;
}
.tree{
    flex: 1;
    overflow: hidden;
    font-size: 20px;
}
.tree li{
    display: flex;
    align-items: center;
    gap: 5px;
    height: 35px;
    padding-left: 37px;
    white-space: nowrap;
}
.tree .root{
    padding-left: 4px;
}
.tree em{
    width: 22px;
    font: italic 14px/13px "Liberation Serif", serif;
}
.vscroll{
    width: 25px;
    background: #eee;
    text-align: center;
}
.vscroll i{
    display: block;
    height: 27px;
    margin-top: 3px;
    background: #cdcdcd;
}
.hscroll{
    display: flex;
    align-items: center;
    gap: 8px;
    height: 27px;
    padding-left: 7px;
    background: #eee;
}
.hscroll i{
    width: 180px;
    height: 100%;
    background: #cdcdcd;
}
.splitter{
    height: 14px;
    border-top: 2px solid #62667c;
    border-bottom: 1px solid #62667c;
}
.studytree{
    padding-top: 2px;
}
.studytree li{
    gap: 7px;
    padding-left: 40px;
}
.studytree .top{
    gap: 14px;
    padding-left: 5px;
}
.studytree .top .small + .small{
    margin-right: -7px;
}
.studytree .open{
    gap: 8px;
    padding-left: 11px;
}
.studytree .open .arrow{
    width: 10px;
    height: 10px;
    margin-right: 10px;
    color: #555;
}
.studytree .sub{
    padding-left: 74px;
}
.studytree .sel{
    width: 80px;
    margin-left: 33px;
    padding-left: 6px;
    border: 1px solid #4f9bc8;
    background: #a6c8e4;
}

/* 图形区域 */
.viewport{
    position: relative;
    flex: 1;
    overflow: hidden;
    background: #fff;
}
.headsup{
    display: flex;
    align-items: center;
    justify-content: center;
    gap: 9px;
    padding: 7px 5px 0 0;
}
.headsup .arrow{
    margin: 0 -1px;
    color: #888;
}
.model{
    position: absolute;
    left: 367px;
    top: 157px;
}
.triad{
    position: absolute;
    left: 45px;
    bottom: 12px;
    font: 15px "Liberation Serif", serif;
}
.taskpane{
    position: absolute;
    right: 0;
    top: 64px;
    width: 42px;
    border: 1px solid #8a8d90;
    border-right: 0;
    background: #a9abae;
}
.taskpane button{
    display: flex;
    align-items: center;
    justify-content: center;
    width: 100%;
    height: 38px;
    border-bottom: 1px solid #8a8d90;
}
.taskpane .on{
    background: #d7dade;
}
.watermark{
    position: absolute;
    right: 4px;
    bottom: -1px;
}
.watermark text{
    paint-order: stroke;
}
.wm-big{
    font: bold 56px "Liberation Sans", sans-serif;
}
.wm-du{
    font: bold 32px "Open Sans", sans-serif;
}
.wm-cn{
    font: bold 42px "Noto Sans CJK SC", sans-serif;
}
.wm-url{
    font: 29px "Open Sans", sans-serif;
}

/* 右键菜单 */
.ctxmenu{
    position: absolute;
    left: 93px;
    top: 189px;
    width: 305px;
    padding: 1px 1px 5px;
    border: 1px solid #a0a0a0;
    background: #f0f0f5;
    box-shadow: 2px 2px 2px #888;
}
.ctxmenu button{
    display: flex;
    align-items: center;
    width: 100%;
    height: 31px;
    padding-left: 5px;
}
.ctxmenu .small{
    margin-right: 10px;
}
.ctxmenu u{
    text-decoration-thickness: 1px;
    text-underline-offset: 2px;
}
.ctxmenu hr{
    margin: 7px 1px 7px 50px;
    border: 0;
    border-top: 1px solid #c8c8cc;
}
/* 红圈标记 */
.mark{
    position: absolute;
    left: 51px;
    top: 250px;
    width: 229px;
    height: 86px;
    border: 6px solid #ff2014;
    border-radius: 50%;
}

/* 底部选项卡 */
.bottom{
    display: flex;
    height: 27px;
    overflow: hidden;
    border-top: 1px solid #8e9194;
    background: #d7dade;
}
.nav{
    display: flex;
    height: 26px;
    margin-left: 22px;
    border-bottom: 6px solid #fff;
}
.nav button{
    width: 19px;
    border: 1px solid #8688a0;
    background: #adafc6;
    line-height: 12px;
}
.bottom > button{
    height: 32px;
    padding: 0 8px;
    border-right: 1px solid #808386;
    background: #a9abae;
    font-size: 20px;
    line-height: 32px;
}
.bottom > .cn{
    padding: 0 10px 0 16px;
    font-size: 21px;
}
.bottom > .on{
    padding-right: 20px;
    background: #d7dade;
}
.bottom .on svg{
    vertical-align: top;
}

/* 后面的窗口 */
.behind{
    display: flex;
    flex-direction: column;
    width: 21px;
    overflow: hidden;
    border-left: 2px solid #ccc;
    background: #eee;
}
.behind div{
    flex: none;
    border-bottom: 1px solid #ccc;
}
.behind .title{
    height: 61px;
    padding-top: 16px;
    border: 0;
    background: #f2f2f2;
    color: #777;
    font-size: 18px;
    white-space: nowrap;
    text-indent: -14px;
}
.behind .bar{
    height: 44px;
    border: 0;
    background: #e1e3e6;
}
.behind .head{
    height: 59px;
}
.behind .notice{
    height: 49px;
    border-color: #cfc09c;
    background: #efedde;
}
.behind .line{
    height: 7px;
}
.behind .block{
    height: 136px;
}
.behind .post{
    height: 244px;
    background: #edede4;
}
.behind .block + .post ~ .post{
    height: 271px;
}
.behind .row{
    height: 32px;
}
.behind .row + .row{
    height: 42px;
}

/* 帮助窗口 */
.help{
    display: flex;
    flex-direction: column;
    width: 43px;
    overflow: hidden;
    border-left: 2px solid #8a8a8a;
    border-top: 1px solid #aaa;
    white-space: nowrap;
}
.helptitle{
    display: flex;
    align-items: center;
    gap: 1px;
    height: 45px;
    padding-left: 10px;
    color: #b06a3a;
}
.helptool{
    height: 48px;
    background: #f0f0f0;
}
.helptool button{
    display: flex;
    flex-direction: column;
    align-items: center;
    padding-left: 10px;
    line-height: 28px;
}
.helptool svg{
    margin-top: 3px;
}
.help h1{
    height: 37px;
    padding-left: 7px;
    border-top: 3px solid #000;
    background: #1f2f3d;
    color: #fff;
    font-size: 16px;
    line-height: 33px;
}
.help ul{
    padding: 15px 0 0 33px;
    font: 10px/15px "Liberation Mono", "Noto Sans CJK SC", monospace;
}
.help li{
    position: relative;
    margin-top: 14px;
}
.help li:first-child, .help .note{
    margin-top: 0;
}
.help .near{
    margin-top: 8px;
}
.help li::before{
    content: ".";
    position: absolute;
    left: -25px;
}
.help .note::before{
    content: none;
}
.help a{
    color: #2a86c8;
    text-decoration: none;
}
.helpfoot{
    height: 32px;
    margin: auto 0 0 8px;
    border-top: 1px solid #ddd;
    border-bottom: 4px solid #f0f0f0;
}
```
